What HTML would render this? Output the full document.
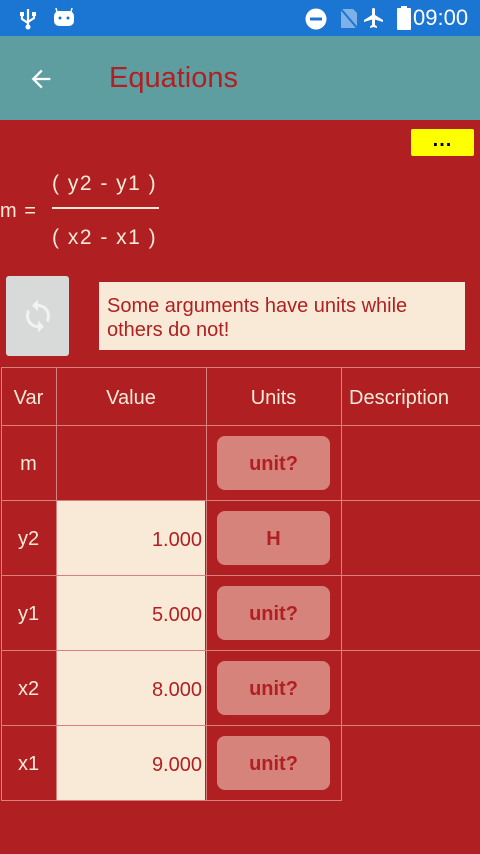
<!DOCTYPE html>
<html><head><meta charset="utf-8"><style>
*{margin:0;padding:0;box-sizing:border-box}
body{width:480px;height:854px;overflow:hidden;background:#b02022;font-family:"Liberation Sans",sans-serif;position:relative}
.abs{position:absolute}
.sb{left:0;top:0;width:480px;height:36px;background:#1b76d3}
.ab{left:0;top:36px;width:480px;height:84px;background:#5f9ea0}
.title{left:109px;top:62px;font-size:29px;color:#b02022}
.cell{position:absolute;color:#f9ead7;font-size:20px;display:flex;align-items:center;justify-content:center;padding-top:4px}
.hl{position:absolute;background:#d9807c;height:1px}
.vl{position:absolute;background:#d9807c;width:1px}
.val{position:absolute;left:57px;width:148px;height:74px;background:#f9ead7;color:#b02022;font-size:20px;text-align:right;padding-right:3px;line-height:78px}
.btn{position:absolute;left:217px;width:113px;height:54px;background:#d6837c;border-radius:8px;color:#b02022;font-size:20px;font-weight:bold;text-align:center;line-height:56px}
</style></head><body>
<div class="abs sb"></div>
<svg class="abs" style="left:18px;top:7px" width="20" height="24" viewBox="0 0 20 24"><path d="M10 2v18M4 8v4l6 4M16 8v3l-6 4" stroke="#fff" stroke-width="2.2" fill="none"/><circle cx="10" cy="20" r="2.5" fill="#fff"/><rect x="2" y="5" width="4" height="4" fill="#fff"/><rect x="14" y="5" width="4" height="4" fill="#fff"/></svg>
<svg class="abs" style="left:53px;top:6px" width="22" height="22" viewBox="0 0 22 22"><rect x="1" y="5" width="20" height="15" rx="5" fill="#fff"/><circle cx="7" cy="12" r="1.5" fill="#1b76d3"/><circle cx="15" cy="12" r="1.5" fill="#1b76d3"/><path d="M4 6l-1-4M18 6l1-4" stroke="#fff" stroke-width="1.5"/></svg>
<svg class="abs" style="left:305px;top:8px" width="22" height="22"><circle cx="11" cy="11" r="10.5" fill="#fff"/><rect x="5" y="9.5" width="12" height="3" fill="#1b76d3"/></svg>
<svg class="abs" style="left:339px;top:7px" width="20" height="22"><path d="M2 2h12l4 4v15H2z" fill="#7fb0e8"/><path d="M1 1l18 21" stroke="#1b76d3" stroke-width="2"/></svg>
<svg class="abs" style="left:362px;top:6px" width="24" height="24" viewBox="0 0 24 24"><path d="M21 16v-2l-8-5V3.5a1.5 1.5 0 0 0-3 0V9l-8 5v2l8-2.5V19l-2 1.5V22l3.5-1 3.5 1v-1.5L13 19v-5.5z" fill="#fff"/></svg>
<svg class="abs" style="left:397px;top:6px" width="14" height="24"><rect x="4" y="0" width="6" height="3" fill="#fff"/><rect x="0" y="2" width="14" height="22" rx="1" fill="#fff"/></svg>
<div class="abs" style="left:413px;top:5px;font-size:22px;color:#fff">09:00</div>
<div class="abs ab"></div>
<svg class="abs" style="left:27px;top:65px" width="28" height="28" viewBox="0 0 24 24"><path d="M20 11H7.8l5.6-5.6L12 4l-8 8 8 8 1.4-1.4L7.8 13H20z" fill="#fff"/></svg>
<div class="abs title">Equations</div>
<div class="abs" style="left:411px;top:129px;width:63px;height:27px;background:#ff0;border-radius:2px;text-align:center;font-size:20px;line-height:22px;font-weight:bold;letter-spacing:1px">...</div>
<div class="abs" style="left:0;top:200px;color:#f9ead7;font-size:20px;letter-spacing:1px">m =</div>
<div class="abs" style="left:52px;top:172px;color:#f9ead7;font-size:21px;white-space:pre;letter-spacing:1.5px">( y2 - y1 )</div>
<div class="abs" style="left:52px;top:207px;width:107px;height:2px;background:#f9ead7"></div>
<div class="abs" style="left:52px;top:226px;color:#f9ead7;font-size:21px;white-space:pre;letter-spacing:1.5px">( x2 - x1 )</div>
<div class="abs" style="left:6px;top:276px;width:63px;height:80px;background:#d8d9d9;border-radius:3px"></div>
<svg class="abs" style="left:20px;top:298px" width="36" height="36" viewBox="0 0 24 24"><path d="M12 4V1L8 5l4 4V6c3.3 0 6 2.7 6 6 0 1-.3 2-.7 2.8l1.5 1.5C19.5 15 20 13.6 20 12c0-4.4-3.6-8-8-8zm0 14c-3.3 0-6-2.7-6-6 0-1 .3-2 .7-2.8L5.2 7.7C4.5 9 4 10.4 4 12c0 4.4 3.6 8 8 8v3l4-4-4-4z" fill="#f2f2f2"/></svg>
<div class="abs" style="left:99px;top:282px;width:366px;height:68px;background:#f9ead7;color:#b02022;font-size:20px;line-height:24px;padding:12px 40px 0 8px">Some arguments have units while others do not!</div>
<div class="hl" style="left:1px;top:367px;width:479px"></div>
<div class="hl" style="left:1px;top:425px;width:479px"></div>
<div class="hl" style="left:1px;top:500px;width:479px"></div>
<div class="hl" style="left:1px;top:575px;width:479px"></div>
<div class="hl" style="left:1px;top:650px;width:479px"></div>
<div class="hl" style="left:1px;top:725px;width:479px"></div>
<div class="hl" style="left:1px;top:800px;width:340px"></div>
<div class="vl" style="left:1px;top:367px;height:434px"></div>
<div class="vl" style="left:56px;top:367px;height:434px"></div>
<div class="vl" style="left:206px;top:367px;height:434px"></div>
<div class="vl" style="left:341px;top:367px;height:434px"></div>
<div class="cell" style="left:1px;top:367px;width:55px;height:58px">Var</div>
<div class="cell" style="left:56px;top:367px;width:150px;height:58px">Value</div>
<div class="cell" style="left:206px;top:367px;width:135px;height:58px">Units</div>
<div class="cell" style="left:341px;top:367px;width:139px;height:58px;justify-content:flex-start;padding-left:8px">Description</div>
<div class="cell" style="left:1px;top:425px;width:55px;height:75px">m</div>
<div class="cell" style="left:1px;top:500px;width:55px;height:75px">y2</div>
<div class="cell" style="left:1px;top:575px;width:55px;height:75px">y1</div>
<div class="cell" style="left:1px;top:650px;width:55px;height:75px">x2</div>
<div class="cell" style="left:1px;top:725px;width:55px;height:75px">x1</div>
<div class="val" style="top:501px">1.000</div>
<div class="val" style="top:576px">5.000</div>
<div class="val" style="top:651px">8.000</div>
<div class="val" style="top:726px">9.000</div>
<div class="btn" style="top:436px">unit?</div>
<div class="btn" style="top:511px">H</div>
<div class="btn" style="top:586px">unit?</div>
<div class="btn" style="top:661px">unit?</div>
<div class="btn" style="top:736px">unit?</div>
</body></html>
